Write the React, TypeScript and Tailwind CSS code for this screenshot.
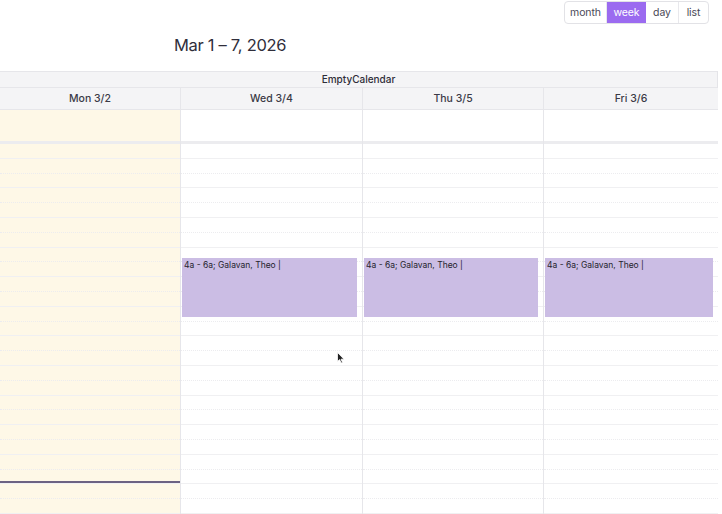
import React from "react";

const days = [
  { label: "Mon 3/2", today: true, event: false },
  { label: "Wed 3/4", today: false, event: true },
  { label: "Thu 3/5", today: false, event: true },
  { label: "Fri 3/6", today: false, event: true },
];

const views = [
  { name: "month", w: "w-[42px]" },
  { name: "week", w: "w-[39px]" },
  { name: "day", w: "w-[33px]" },
  { name: "list", w: "w-[29px]" },
];
const slots = Array.from({ length: 26 }, (_, i) => i);

const App = () => {
  return (
    <div className="w-[722px] h-[514px] overflow-hidden bg-white text-[#2b2a35] font-['Inter','Liberation_Sans',sans-serif]">
      {/* toolbar */}
      <div className="flex h-[71px]">
        <div className="pl-[174px] pt-[33px] text-[16.5px] tracking-[-0.3px] text-[#2f2e3b]">
          Mar 1 – 7, 2026
        </div>
        <div className="ml-auto mr-[13px] mt-px flex h-[23px] rounded-[4px] border border-[#e2e2e6] text-[10.5px] tracking-[-0.1px]">
          {views.map((v) => (
            <div
              key={v.name}
              className={
                v.name === "week"
                  ? `${v.w} flex items-center justify-center bg-[#9b6bf0] text-white`
                  : `${v.w} flex items-center justify-center text-[#4a4957] border-r border-[#e8e8ec] last:border-r-0`
              }
            >
              {v.name}
            </div>
          ))}
        </div>
      </div>

      {/* calendar */}
      <div className="w-[718px] border-r border-[#e4e4e8]">
        <div className="h-[17px] flex items-center justify-center bg-[#f4f4f6] border-y border-[#e6e6ea] text-[10px] font-medium text-[#2e2d38]">
          EmptyCalendar
        </div>
        <div className="grid grid-cols-[180px_182px_181px_175px]">
          {days.map((d, i) => (
            <div key={d.label} className={i > 0 ? "border-l border-[#e6e6ea]" : ""}>
              <div className="h-[22px] flex items-center justify-center bg-[#f4f4f6] border-b border-[#e6e6ea] text-[10.5px] font-medium text-[#3b3a46]">
                {d.label}
              </div>
              <div className={d.today ? "h-[31px] bg-[#fef8e7]" : "h-[31px] bg-white"} />
              <div className="h-[3px] bg-[#ececef]" />
              <div className={d.today ? "relative bg-[#fef8e7]" : "relative bg-white"}>
                {slots.map((s) => (
                  <div
                    key={s}
                    className={
                      s % 2 === 0
                        ? "h-[14.8px] border-b border-[#f0f0f2]"
                        : "h-[14.8px] border-b border-dotted border-[#ececef]"
                    }
                  />
                ))}
                {d.event && (
                  <div className="absolute left-[1px] right-[5px] top-[114px] h-[59px] bg-[#cbbde4] px-[2px] pt-[2px] text-[8.5px] leading-[10px] text-[#24232c]">
                    4a - 6a; Galavan, Theo |
                  </div>
                )}
                {d.today && (
                  <div className="absolute left-0 right-0 top-[337px] h-[2px] bg-[#6c6282]" />
                )}
              </div>
            </div>
          ))}
        </div>
      </div>

      {/* mouse cursor */}
      <svg
        className="absolute left-[337px] top-[352px]"
        width="8"
        height="12"
        viewBox="0 0 8 12"
      >
        <path d="M0.5 0.5 L0.5 9.5 L2.6 7.6 L4.2 11 L5.5 10.4 L4 7.2 L7 7.2 Z" fill="#222" stroke="#fff" strokeWidth="0.8" />
      </svg>
    </div>
  );
};

export default App;
